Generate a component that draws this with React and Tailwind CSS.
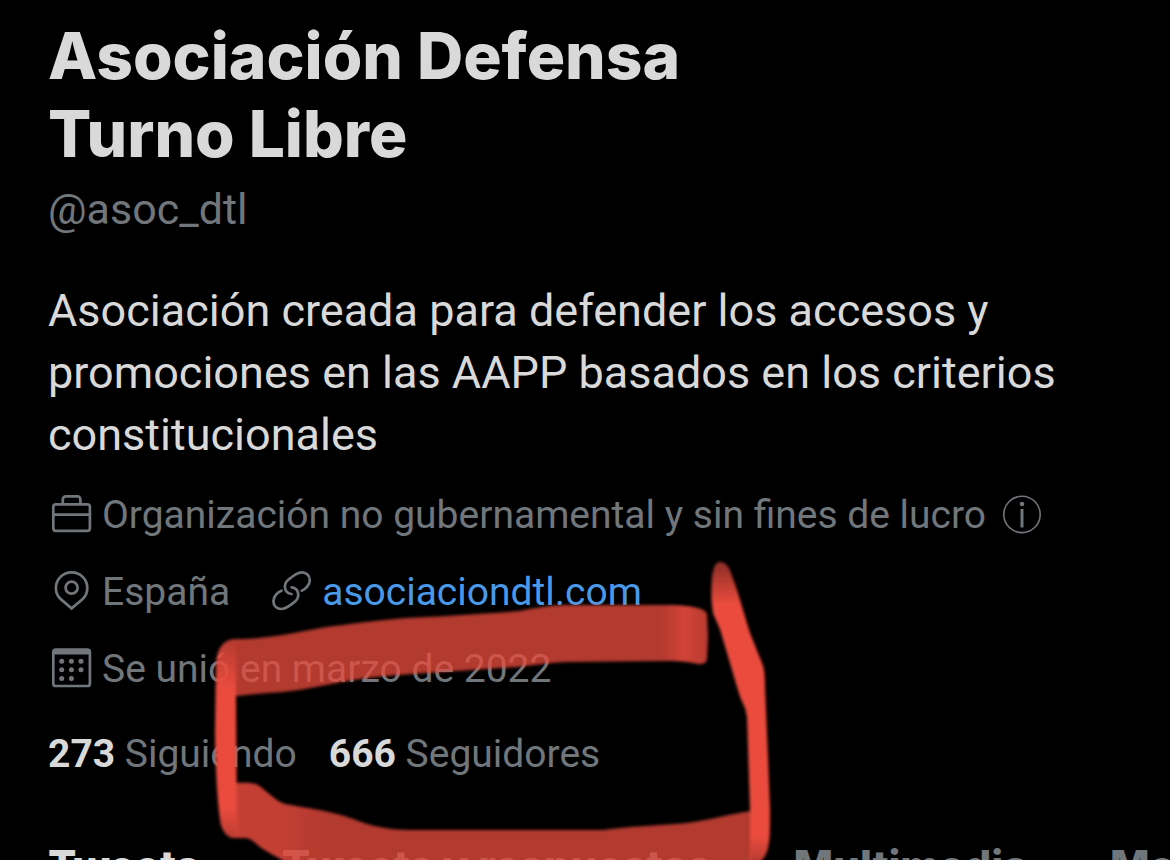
const tabs = ["Tweets", "Tweets y respuestas", "Multimedia", "Me gusta"];

function Icon({ children }) {
  return (
    <svg viewBox="0 0 46 48" className="h-12 w-[46px] shrink-0" fill="none" stroke="currentColor" strokeWidth="2.7" strokeLinecap="round" strokeLinejoin="round" aria-hidden="true">
      {children}
    </svg>
  );
}

function BriefcaseIcon() {
  return (
    <Icon>
      <rect x="5.3" y="13.3" width="36.6" height="26.6" rx="2.6" />
      <path d="M5.3 23.6h36.6M14.8 13V8.4a3 3 0 0 1 3-3h11.6a3 3 0 0 1 3 3V13" />
    </Icon>
  );
}

function PinIcon() {
  return (
    <Icon>
      <circle cx="23.6" cy="19.7" r="6" />
      <path d="M23.6 40.4 13 31.4C9.4 28.3 7.9 24.5 7.9 20a15.7 15.7 0 0 1 31.4 0c0 4.5-1.5 8.3-5.1 11.4z" strokeLinejoin="miter" />
    </Icon>
  );
}

function LinkIcon() {
  return (
    <Icon>
      <path d="M33.7 22.7C37 21.8 41.8 17 41.8 12.2C41.8 7.5 38.3 4.4 34 4.4C30 4.4 27.5 6.500 24.5 8.500L20 12C15.500 16 15.500 25 23.500 26" />
      <path d="M13.5 22.7C10.2 23.6 5.4 28.4 5.4 33.2C5.4 37.9 8.9 41 13.2 41C17.2 41 19.7 38.9 22.7 36.900L27.2 33.4C31.7 29.4 31.7 20.4 23.7 19.4" />
    </Icon>
  );
}

function CalendarIcon() {
  return (
    <Icon>
      <rect x="5.3" y="4.6" width="36.6" height="36.4" rx="2.6" />
      <path d="M5.3 6.8h36.6" strokeWidth="5.6" strokeLinecap="butt" />
      <g fill="currentColor" stroke="none">
        <circle cx="13.7" cy="16.2" r="2.5" />
        <circle cx="23.4" cy="16.2" r="2.5" />
        <circle cx="33" cy="16.2" r="2.5" />
        <circle cx="13.7" cy="24.8" r="2.5" />
        <circle cx="23.4" cy="24.8" r="2.5" />
        <circle cx="33" cy="24.8" r="2.5" />
        <circle cx="13.7" cy="33.4" r="2.5" />
        <circle cx="23.4" cy="33.4" r="2.5" />
      </g>
    </Icon>
  );
}

function InfoIcon() {
  return (
    <svg viewBox="0 0 40 40" className="size-10" fill="none" stroke="currentColor" aria-hidden="true">
      <circle cx="20" cy="19.4" r="18.2" strokeWidth="1.6" />
      <circle cx="20" cy="9" r="2.3" fill="currentColor" stroke="none" />
      <path d="M20 14v18.500" strokeWidth="3" />
    </svg>
  );
}

// freehand marker strokes around the followers count
function Marker() {
  return (
    <svg viewBox="0 0 1170 860" width="1170" height="860" className="pointer-events-none absolute left-0 top-0 max-w-none" aria-hidden="true">
      <defs>
        <filter id="soft" x="-5%" y="-5%" width="110%" height="110%">
          <feGaussianBlur stdDeviation="1.5" />
        </filter>
        <linearGradient id="topBand" gradientUnits="userSpaceOnUse" x1="216" y1="0" x2="709" y2="0">
          <stop offset="0" stopColor="#ea4b3d" stopOpacity="0.8" />
          <stop offset="0.06" stopColor="#ea4b3d" stopOpacity="0.76" />
          <stop offset="0.9" stopColor="#ea4b3d" stopOpacity="0.76" />
          <stop offset="0.95" stopColor="#ea4b3d" stopOpacity="0.9" />
          <stop offset="1" stopColor="#ea4b3d" stopOpacity="0.78" />
        </linearGradient>
        <linearGradient id="bottomBand" gradientUnits="userSpaceOnUse" x1="230" y1="0" x2="330" y2="0">
          <stop offset="0" stopColor="#ea4b3d" stopOpacity="0.84" />
          <stop offset="0.45" stopColor="#ea4b3d" stopOpacity="0.84" />
          <stop offset="1" stopColor="#ea4b3d" stopOpacity="0.76" />
        </linearGradient>
        <linearGradient id="leftBar" gradientUnits="userSpaceOnUse" x1="0" y1="640" x2="0" y2="838">
          <stop offset="0" stopColor="#ea4b3d" stopOpacity="0" />
          <stop offset="0.25" stopColor="#ea4b3d" />
          <stop offset="0.85" stopColor="#ea4b3d" />
          <stop offset="1" stopColor="#ea4b3d" stopOpacity="0.8" />
        </linearGradient>
        <linearGradient id="rightBar" gradientUnits="userSpaceOnUse" x1="0" y1="562" x2="0" y2="860">
          <stop offset="0" stopColor="#ea4b3d" stopOpacity="0.6" />
          <stop offset="0.14" stopColor="#ea4b3d" />
          <stop offset="0.92" stopColor="#ea4b3d" />
          <stop offset="1" stopColor="#ea4b3d" stopOpacity="0.8" />
        </linearGradient>
      </defs>
      <g filter="url(#soft)">
        <path fill="url(#topBand)" d="M216 663C217 648 224 639 235 639C250 639 258 638 267 637C295 634 318 627 343 625C372 621 398 618 427 617C460 615 495 613 520 611C545 606 555 605 567 605L675 605C692 606 705 608 707 614L708 637L707 659C706 664 702 664 698 664C685 661 675 661 667 661L567 662C540 663 520 668 500 668C450 672 410 673 367 678C330 683 300 692 267 693L236 696L216 700Z" />
        <path fill="url(#bottomBand)" d="M236 783C250 782 256 783 262 788C272 796 278 802 285 804C305 808 318 809 333 813C350 817 355 820 367 824C385 829 398 830 413 830L603 830C630 826 655 826 687 823C710 820 730 814 751 811L751 866L291 866C280 858 270 854 260 847C255 843 252 839 246 838L236 838Z" />
        <path fill="url(#leftBar)" d="M216 663C217 648 224 639 236 639L236 697L237 838L232 838C225 836 221 828 220 820C217 797 215 760 215 730Z" />
        <path fill="url(#rightBar)" d="M720 562C726 562 729 567 731 573L737 590L750 633L762 663C765 670 765 680 765 687L768 757L770 810C770 830 770 840 768 848Q766 857 760 862L750 862L750 810L747 717L745 708C741 700 739 694 737 687L722 636C719 625 715 619 713 613C711 600 711 590 712 578C713 569 715 562 720 562Z" />
      </g>
    </svg>
  );
}

export default function App() {
  return (
    <main className="relative h-screen overflow-hidden bg-black px-12 pt-[17px] font-['Roboto',sans-serif] text-[#71767b]">
      <h1 className="max-w-[700px] font-['Inter',sans-serif] text-[64px] leading-[78px] font-extrabold text-[#d9d9d9]">
        Asociación Defensa Turno Libre
      </h1>
      <p className="mt-[10px] text-[43px] leading-[52px]">@asoc_dtl</p>
      <p className="mt-[45px] text-[45px] leading-[62px] text-[#d9d9d9]">
        Asociación creada para defender los accesos y promociones en las AAPP basados en los criterios constitucionales
      </p>

      <ul className="mt-[25px] flex flex-col gap-[29px] text-[39px] leading-[48px] whitespace-nowrap">
        <li className="flex items-center gap-2">
          <BriefcaseIcon />
          <span>Organización no gubernamental y sin fines de lucro</span>
          <button type="button" aria-label="Más información" className="ml-2">
            <InfoIcon />
          </button>
        </li>
        <li className="flex items-center gap-[38px]">
          <span className="flex items-center gap-2">
            <PinIcon />
            España
          </span>
          <span className="flex items-center gap-2">
            <LinkIcon />
            <a href="#sitio" className="text-[#4a99e9]">asociaciondtl.com</a>
          </span>
        </li>
        <li className="flex items-center gap-2">
          <CalendarIcon />
          <span>Se unió en marzo de 2022</span>
        </li>
      </ul>

      <div className="mt-[37px] flex gap-8 text-[39px] leading-[48px] whitespace-nowrap">
        <a href="#siguiendo"><strong className="font-bold text-[#d9d9d9]">273</strong> Siguiendo</a>
        <a href="#seguidores"><strong className="font-bold text-[#d9d9d9]">666</strong> Seguidores</a>
      </div>

      <nav className="mt-16 flex gap-[82px] font-['Inter',sans-serif] text-[42px] leading-[48px] font-extrabold whitespace-nowrap">
        {tabs.map((tab, i) => (
          <a key={tab} href="#tab" className={i === 0 ? "text-[#d9d9d9]" : ""}>{tab}</a>
        ))}
      </nav>

      <Marker />
    </main>
  );
}
